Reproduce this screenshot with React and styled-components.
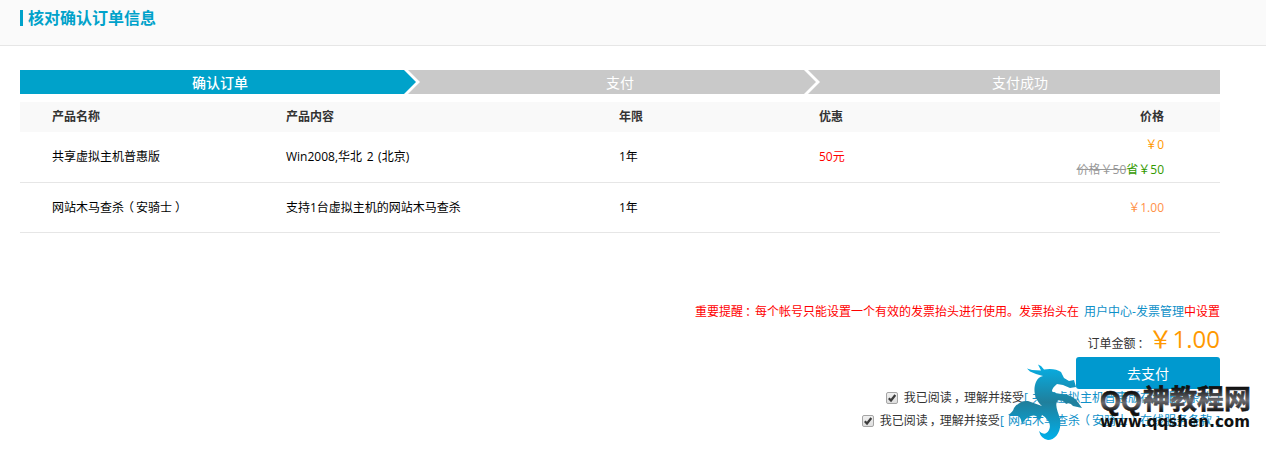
import React from 'react';
import styled, { createGlobalStyle } from 'styled-components';

const Global = createGlobalStyle`
  * { box-sizing: border-box; }
  body {
    margin: 0;
    background: #fff;
    color: #333;
    font: 12px/18px "Open Sans", "Noto Sans CJK SC", sans-serif;
    word-spacing: 1px;
  }
`;

const Page = styled.div`
  position: relative;
  width: 1266px;
  height: 460px;
  overflow: hidden;
`;
const Header = styled.header`
  display: flex;
  height: 46px;
  padding: 10px 20px 0;
  background: #fafafa;
  border-bottom: 1px solid #e6e6e6;
`;
const Title = styled.h1`
  height: 16px;
  margin: 0;
  padding-left: 5px;
  border-left: 3px solid #00a2ca;
  color: #00a2ca;
  font-size: 16px;
  font-weight: 700;
  line-height: 16px;
`;
const Main = styled.main`
  width: 1200px;
  margin: 24px 0 0 20px;
`;
const Steps = styled.div`
  display: flex;
  height: 24px;
  margin-bottom: 8px;
  background: #c9c9c9;
`;
const Step = styled.div`
  display: flex;
  width: 400px;
  color: #fff;
  font-size: 14px;
  line-height: 25px;
`;
const StepLabel = styled.div`
  flex: 1;
  padding-left: ${p => (p.$last ? 0 : 16)}px;
  text-align: center;
  font-weight: ${p => (p.$active ? 500 : 400)};
  background: ${p => (p.$active ? '#00a2ca' : '#c9c9c9')};
`;
const Arrow = styled.svg`
  width: 16px;
  height: 24px;
`;
const Row = styled.div`
  display: grid;
  grid-template-columns: 234px 333px 200px 200px 145px;
  align-items: center;
  height: ${p => p.$height}px;
  padding-left: 32px;
  color: #000;
  border-bottom: 1px solid #e6e6e6;
`;
const HeadRow = styled(Row)`
  color: #333;
  font-weight: 700;
  background: #f9f9f9;
  border-bottom: 0;
`;
const HeadPrice = styled.span`
  text-align: right;
`;
const Content = styled.span`
  word-spacing: 1.5px;
`;
const Discount = styled.span`
  color: #f00;
`;
const Price = styled.div`
  color: ${p => p.$color || 'inherit'};
  text-align: right;
  line-height: 25px;
`;
const Old = styled.span`
  color: #999;
  text-decoration: line-through;
`;
const Saved = styled.span`
  color: #390;
`;
const Summary = styled.section`
  display: flex;
  flex-direction: column;
  align-items: flex-end;
  margin-top: 69px;
`;
const Notice = styled.p`
  margin: 0 0 1px;
  color: #f00;
  line-height: 19px;
  word-spacing: 2px;
`;
const Link = styled.a`
  color: #0e90c8;
`;
/* Centres full-width punctuation in its cell */
const Mark = styled.span`
  display: inline-block;
  width: 12px;
  text-indent: ${p => p.$shift}px;
  white-space: nowrap;
`;
const Total = styled.div`
  display: flex;
  align-items: baseline;
  height: 35px;
  line-height: 33px;
`;
const Amount = styled.span`
  margin-left: 1px;
  color: #f90;
  font-size: 24px;
`;
const PayButton = styled.button`
  width: 144px;
  height: 32px;
  padding: 0;
  border: 0;
  border-radius: 3px;
  background: #0099cf;
  color: #fff;
  font: 14px/30px "Noto Sans CJK SC", sans-serif;
`;
const Agreements = styled.div`
  display: flex;
  flex-direction: column;
  align-items: flex-end;
  margin-top: -3px;
`;
const Agreement = styled.label`
  display: flex;
  align-items: center;
  height: 23px;
  white-space: pre;
`;
const Box = styled.span`
  display: flex;
  width: 12px;
  height: 12px;
  margin-right: 6px;
  border: 1px solid #a5a5a5;
  border-radius: 2px;
  background: linear-gradient(#f0f0f0, #dedede);
`;
const Watermark = styled.svg`
  position: absolute;
  left: 1004px;
  top: 360px;
  width: 256px;
  height: 84px;
`;

function StepArrow({ fill }) {
  return (
    <Arrow viewBox="0 0 16 24">
      <path d="M0 0h4l12 12L4 24H0z" fill="#fff" />
      <path d="M0 0l12 12L0 24z" fill={fill} />
    </Arrow>
  );
}

function Knight() {
  return (
    <>网站木马查杀<Mark $shift={-2}>（</Mark>安骑士<Mark $shift={3}>）</Mark></>
  );
}

function Agree({ children }) {
  return (
    <Agreement>
      <Box>
        <svg width="10" height="10" viewBox="0 0 10 10">
          <path d="M1.8 5.2l2.2 2.3L8.3 2" fill="none" stroke="#3c3c3c" strokeWidth="2.2" />
        </svg>
      </Box>
      <span>
        我已阅读<Mark $shift={2}>，</Mark>理解并接受<Link>[ {children}在线服务条款 ]</Link>
      </span>
    </Agreement>
  );
}

export default function App() {
  return (
    <Page>
      <Global />
      <Header>
        <Title>核对确认订单信息</Title>
      </Header>
      <Main>
        <Steps>
          <Step><StepLabel $active>确认订单</StepLabel><StepArrow fill="#00a2ca" /></Step>
          <Step><StepLabel>支付</StepLabel><StepArrow fill="#c9c9c9" /></Step>
          <Step><StepLabel $last>支付成功</StepLabel></Step>
        </Steps>
        <HeadRow $height={30}>
          <span>产品名称</span>
          <span>产品内容</span>
          <span>年限</span>
          <span>优惠</span>
          <HeadPrice>价格</HeadPrice>
        </HeadRow>
        <Row $height={51}>
          <span>共享虚拟主机普惠版</span>
          <Content>Win2008,华北 2 (北京)</Content>
          <span>1年</span>
          <Discount>50元</Discount>
          <div>
            <Price $color="#f90">￥0</Price>
            <Price><Old>价格￥50</Old><Saved>省￥50</Saved></Price>
          </div>
        </Row>
        <Row $height={50}>
          <span><Knight /></span>
          <span>支持1台虚拟主机的网站木马查杀</span>
          <span>1年</span>
          <span />
          <Price $color="#ff9147">￥1.00</Price>
        </Row>
        <Summary>
          <Notice>
            重要提醒<Mark $shift={2}>：</Mark>每个帐号只能设置一个有效的发票抬头进行使用。发票抬头在 <Link>用户中心-发票管理</Link>中设置
          </Notice>
          <Total>
            <span>订单金额<Mark $shift={2}>：</Mark></span>
            <Amount>￥1.00</Amount>
          </Total>
          <PayButton>去支付</PayButton>
          <Agreements>
            <Agree>共享虚拟主机普惠版</Agree>
            <Agree><Knight /></Agree>
          </Agreements>
        </Summary>
      </Main>
      <Watermark viewBox="1004 360 256 84">
        <defs>
          <linearGradient id="dragon" x1="0" y1="0" x2="0" y2="1">
            <stop offset="0" stopColor="#06b0e6" />
            <stop offset=".5" stopColor="#207f9c" />
            <stop offset="1" stopColor="#00b0ea" />
          </linearGradient>
          <linearGradient id="metal" x1="0" y1="0" x2="0" y2="1">
            <stop offset=".25" stopColor="#111" />
            <stop offset=".58" stopColor="#6c6c70" />
            <stop offset=".85" stopColor="#111" />
          </linearGradient>
        </defs>
        <path
          fill="url(#dragon)"
          d="M1038 364.500L1041 366L1044 369.500Q1055 368 1061 372L1064 378L1069 381L1074 380L1076 387L1070 388L1063 385L1057 384Q1052 388 1052 391C1054 395 1068 392 1075 399Q1079 403 1082 408L1073 406Q1070 402 1066 404Q1064 400 1058 400C1054 405 1058 411 1060 419C1062 432 1055 440 1048 440Q1041 439 1039 431Q1045 437 1049 430C1052 424 1047 418 1042 415L1040 420Q1036 414 1031 416Q1025 418 1022 424Q1021 416 1016 415L1008 415Q1013 412 1014 408Q1020 400 1028 401L1042 406C1034 399 1033 389 1036 382Q1038 377 1043 376L1036 374L1030 371.500L1027 368.500L1032 370L1041 370.500Z"
        />
        <text x="1100" y="410" textLength="42" lengthAdjust="spacingAndGlyphs" fill="url(#metal)" stroke="url(#metal)" strokeWidth=".5" fontFamily="Liberation Sans" fontSize="28" fontWeight="700">QQ</text>
        <text x="1143" y="409" textLength="108" lengthAdjust="spacingAndGlyphs" fill="url(#metal)" stroke="url(#metal)" strokeWidth=".6" fontFamily="Noto Sans CJK SC" fontSize="27" fontWeight="700">神教程网</text>
        <text x="1100" y="427" textLength="150" lengthAdjust="spacingAndGlyphs" fill="#111" fontFamily="DejaVu Sans" fontSize="16" fontWeight="700">www.qqshen.com</text>
      </Watermark>
    </Page>
  );
}
